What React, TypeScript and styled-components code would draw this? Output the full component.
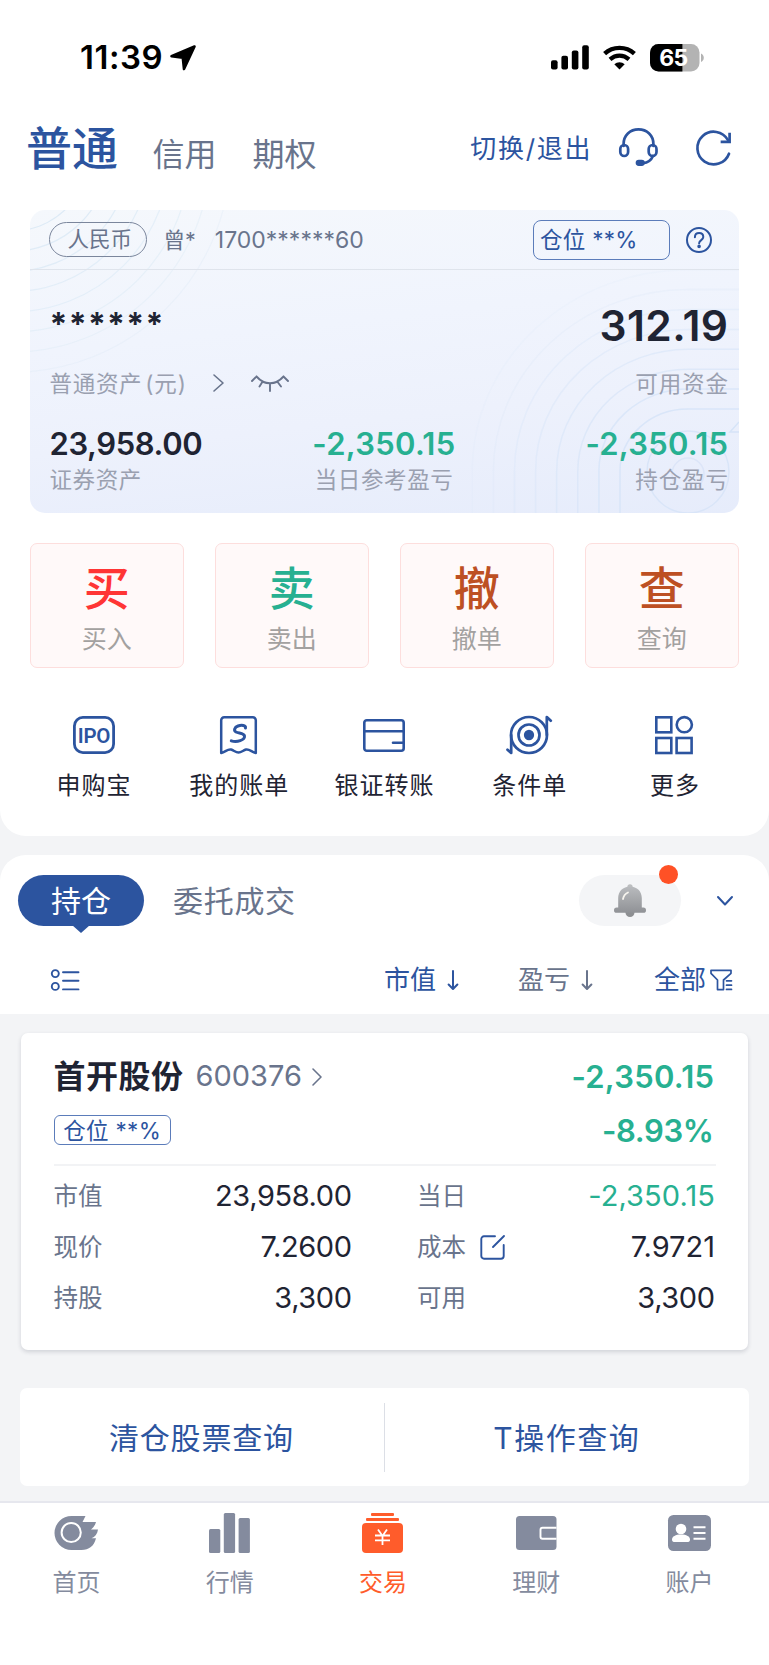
import React from "react";
import styled, { createGlobalStyle } from "styled-components";

const BLUE = "#2c549f";
const SLATE = "#69748c";
const INK = "#1f2433";
const GREEN = "#27b091";
const ORANGE = "#ff5c2b";
const GREY = "#848b9e";
const CAPTION = "#9aa0b0";

const GlobalStyle = createGlobalStyle`
  * { box-sizing: border-box; }
  html, body { margin: 0; padding: 0; background: #f3f4f6; }
  body { font-family: Inter, "Noto Sans CJK SC", sans-serif; -webkit-font-smoothing: antialiased; }
  svg { display: block; flex: none; overflow: visible; }
`;

const Screen = styled.div`
  width: 769px;
  height: 1665px;
  display: flex;
  flex-direction: column;
  overflow: hidden;
  background: #f3f4f6;
  color: ${INK};
`;

const Text = styled.span<{ $size: number; $color?: string; $weight?: number; $track?: number }>`
  display: block;
  font-size: ${(p) => p.$size}px;
  line-height: 1.2;
  color: ${(p) => p.$color ?? INK};
  font-weight: ${(p) => p.$weight ?? 400};
  letter-spacing: ${(p) => p.$track ?? 0}px;
  margin-right: ${(p) => -(p.$track ?? 0)}px;
  white-space: pre;
`;

const TopPanel = styled.section`
  height: 836px;
  flex: none;
  background: #fff;
  border-radius: 0 0 26px 26px;
`;

const StatusBar = styled.div`
  height: 115px;
  padding: 0 65px 0 80px;
  display: flex;
  align-items: center;
  svg:first-of-type { margin-left: 7px; }
`;

const StatusIcons = styled.div`
  margin-left: auto;
  display: flex;
  align-items: center;
  gap: 14px;
  svg:first-of-type { margin-left: 0; }
`;

const Header = styled.header`
  height: 68px;
  padding: 0 37px 0 26px;
  display: flex;
  align-items: center;
`;

const HeaderTab = styled(Text)<{ $gap: number }>`
  margin-left: ${(p) => p.$gap}px;
  padding-top: 13px;
`;

const HeaderActions = styled.div`
  margin-left: auto;
  display: flex;
  align-items: center;
  margin-top: -3px;
  > span { padding-top: 2px; }
`;

const ActionIcon = styled.div<{ $gap: number }>`
  margin-left: ${(p) => p.$gap}px;
`;

const AssetCard = styled.div`
  position: relative;
  height: 303px;
  margin: 27px 30px 0;
  border-radius: 15px;
  overflow: hidden;
  background: linear-gradient(174deg, #f5f8fc 0%, #f0f4fd 38%, #edf1fc 65%, #e6ecfb 100%);
`;

const CardPattern = styled.svg`
  position: absolute;
  inset: 0;
`;

const CardHead = styled.div`
  position: relative;
  height: 60px;
  padding: 0 27px 0 19px;
  display: flex;
  align-items: center;
  border-bottom: 1px solid #dfe4ec;
  > span { padding-top: 2px; }
`;

const CurrencyPill = styled.div`
  width: 98px;
  height: 35px;
  padding-left: 17.5px;
  margin-right: 16.5px;
  border: 1px solid #7b869c;
  border-radius: 18px;
  display: flex;
  align-items: center;
`;

const AccountNo = styled(Text)`
  margin-left: 19px;
`;

const RatioBox = styled.div`
  width: 137px;
  height: 40px;
  margin-left: auto;
  margin-right: 16px;
  padding-left: 6px;
  border: 1px solid #5b7cba;
  border-radius: 8px;
  display: flex;
  align-items: center;
`;

const CardBody = styled.div`
  position: relative;
  padding: 30px 11px 0 19.5px;
`;

const AmountRow = styled.div`
  height: 50px;
  display: flex;
  align-items: center;
  justify-content: space-between;
`;

const CaptionRow = styled.div`
  height: 30px;
  margin-top: 18px;
  display: flex;
  align-items: center;
`;

const CaptionIcon = styled.div<{ $gap: number }>`
  margin-left: ${(p) => p.$gap}px;
`;

const Trailing = styled.div`
  margin-left: auto;
`;

const Stats = styled.div`
  display: grid;
  grid-template-columns: 1fr auto 1fr;
  margin: 28px 0 0 -10px;
`;

const Stat = styled.div<{ $align: string }>`
  display: flex;
  flex-direction: column;
  align-items: ${(p) => p.$align};
  padding-left: ${(p) => (p.$align === "flex-start" ? 10 : 0)}px;
  > span { height: 36px; line-height: 36px; }
`;

const TradeRow = styled.div`
  display: grid;
  grid-template-columns: repeat(4, 1fr);
  gap: 30.5px;
  padding: 30px 30px 0 29.5px;
`;

const TradeButton = styled.button`
  height: 125px;
  padding: 18px 0 0;
  border: 1.5px solid #fddedd;
  border-radius: 7px;
  background: #fff9f9;
  font-family: inherit;
  display: flex;
  flex-direction: column;
  align-items: center;
  > span:first-child { height: 52px; line-height: 52px; }
  > span:last-child { height: 50px; line-height: 50px; }
`;

const ShortcutRow = styled.nav`
  display: grid;
  grid-template-columns: repeat(5, 1fr);
  padding: 42px 22px 0 21px;
`;

const Shortcut = styled.div`
  display: flex;
  flex-direction: column;
  align-items: center;
  > span { height: 50px; line-height: 50px; margin-top: 1px; }
`;

const ShortcutIcon = styled.div`
  height: 50px;
  display: flex;
  align-items: center;
`;

const HoldingsPanel = styled.section`
  height: 159px;
  flex: none;
  margin-top: 19px;
  background: #fff;
  border-radius: 26px 26px 0 0;
`;

const TabRow = styled.div`
  display: flex;
  align-items: center;
  height: 51px;
  margin-top: 20px;
  padding: 0 36px 0 18px;
`;

const ActiveTab = styled.div`
  position: relative;
  width: 126px;
  height: 51px;
  margin-right: 29px;
  border-radius: 26px;
  background: ${BLUE};
  display: flex;
  align-items: center;
  justify-content: center;
  &::after {
    content: "";
    position: absolute;
    left: 54px;
    top: 50px;
    border: 9px solid transparent;
    border-top: 8px solid ${BLUE};
    border-bottom: 0;
  }
`;

const BellPill = styled.div`
  position: relative;
  width: 102px;
  height: 51px;
  margin-left: auto;
  margin-right: 36px;
  border-radius: 26px;
  background: #f4f5f7;
  display: flex;
  align-items: center;
  justify-content: center;
`;

const Dot = styled.i`
  position: absolute;
  right: 3px;
  top: -10px;
  width: 19px;
  height: 19px;
  border-radius: 50%;
  background: #ff5126;
`;

const SortRow = styled.div`
  display: flex;
  align-items: center;
  height: 50px;
  margin-top: 29px;
  padding: 0 37px 0 51px;
`;

const SortItem = styled.div<{ $gap?: number; $inner: number }>`
  display: flex;
  align-items: center;
  gap: ${(p) => p.$inner}px;
  margin-left: ${(p) => (p.$gap ? `${p.$gap}px` : "auto")};
`;

const StockCard = styled.article`
  height: 317px;
  flex: none;
  margin: 19px 21px 0;
  padding: 17px 32.5px 0 32.5px;
  border-radius: 7px;
  background: #fff;
  box-shadow: 0 2px 4px rgba(30, 40, 60, 0.16);
`;

const StockLine = styled.div`
  height: 53.5px;
  padding-right: 1.5px;
  display: flex;
  align-items: center;
`;

const StockCode = styled(Text)`
  margin-left: 12.5px;
  margin-right: 10px;
`;

const StockTag = styled.div`
  width: 117px;
  height: 30px;
  border: 1px solid #5b7cba;
  border-radius: 6px;
  display: flex;
  align-items: center;
  justify-content: center;
`;

const Details = styled.div`
  display: grid;
  grid-template-columns: 298.5px 298px;
  justify-content: space-between;
  margin-top: 7px;
  padding-top: 5px;
  padding-right: 0.5px;
  border-top: 2px solid #f2f3f5;
`;

const Detail = styled.div`
  height: 51px;
  display: flex;
  align-items: center;
  svg { margin-left: 14px; }
`;

const QueryCard = styled.div`
  height: 98px;
  flex: none;
  margin: 38px 20px 0;
  border-radius: 7px;
  background: #fff;
  display: grid;
  grid-template-columns: 1fr 1px 1fr;
  align-items: center;
  justify-items: center;
  > span { padding: 2px 2px 0 0; }
`;

const QueryDivider = styled.i`
  width: 1px;
  height: 69px;
  background: #dcdfe6;
`;

const TabBar = styled.nav`
  margin-top: 15px;
  flex: 1;
  border-top: 2px solid #e6e7ee;
  background: #fff;
  display: grid;
  grid-template-columns: repeat(5, 1fr);
  padding: 8px 3px 0 0;
`;

const TabItem = styled.div`
  display: flex;
  flex-direction: column;
  align-items: center;
  > span { height: 50px; line-height: 50px; margin-top: 3px; }
`;

const TabIcon = styled.div`
  height: 44px;
  display: flex;
  align-items: center;
`;

const line = (width: number, color = BLUE) => ({
  fill: "none",
  stroke: color,
  strokeWidth: width,
  strokeLinecap: "round" as const,
  strokeLinejoin: "round" as const,
});

const LocationArrow = () => (
  <svg width="26" height="26" viewBox="0 0 26 26">
    <path d="M24.500 1.500 1.500 11.200 12.800 12.600 14 24z" fill="#000" stroke="#000" strokeWidth="2.600" strokeLinejoin="round" />
  </svg>
);

const Signal = () => (
  <svg width="38" height="25" viewBox="0 0 38 25">
    {[9.3, 13.8, 19, 24.3].map((h, i) => (
      <rect key={h} x={i * 10.4} y={24.6 - h} width="6.6" height={h} rx="2" fill="#000" />
    ))}
  </svg>
);

const Wifi = () => (
  <svg width="33" height="25" viewBox="0 0 33 25">
    <path d="M1.6 8.6C10 .9 23 .9 31.4 8.6" fill="none" stroke="#000" strokeWidth="4.4" />
    <path d="M7 14.4c5.6-5 13.4-5 19 0" fill="none" stroke="#000" strokeWidth="4.2" />
    <path d="M16.5 24.6 11.3 19.2c3-2.7 7.4-2.7 10.4 0z" fill="#000" />
  </svg>
);

const Battery = () => (
  <svg width="54" height="28" viewBox="0 0 54 28">
    <defs>
      <clipPath id="battery-shell"><rect width="49.5" height="27.4" rx="8.5" /></clipPath>
    </defs>
    <g clipPath="url(#battery-shell)">
      <rect width="50" height="28" fill="#b3b3b3" />
      <rect width="32.4" height="28" fill="#000" />
    </g>
    <path d="M51 9.5c1.8.8 2.8 2.3 2.8 4.3s-1 3.500-2.800 4.300z" fill="#b3b3b3" />
    <text x="23.500" y="22" textAnchor="middle" fontSize="23" fontWeight="700" letterSpacing="-0.500" fill="#fff">65</text>
  </svg>
);

const Headset = () => (
  <svg width="39" height="39" viewBox="0 0 39 39" {...line(2.7)}>
    <path d="M4.600 18V16C4.600 7.500 11 1.400 19.500 1.400S34.400 7.500 34.400 16v2" />
    <rect x="1.300" y="17" width="7.800" height="11" rx="3.900" />
    <rect x="29.700" y="17" width="7.800" height="11" rx="3.900" />
    <path d="M34 28c-1.800 4.200-5 6.700-10 7.200" />
    <rect x="18" y="33" width="6.500" height="3.600" rx="1.800" fill={BLUE} />
  </svg>
);

const Refresh = () => (
  <svg width="36" height="36" viewBox="0 0 36 36" {...line(2.700)}>
    <path d="M33 23.700A16.300 16.300 0 1 1 32 10.200" />
    <path d="M33.600 4v7.800H26" strokeLinecap="square" strokeLinejoin="miter" />
  </svg>
);

const Help = () => (
  <svg width="26" height="26" viewBox="0 0 26 26" {...line(2)}>
    <circle cx="13" cy="13" r="12" />
    <path d="M8.900 10.300c0-2.600 1.700-4.200 4.200-4.200s4.200 1.500 4.200 3.900c0 3-4.200 3.200-4.200 6.300" />
    <circle cx="13.100" cy="19.400" r=".8" fill={BLUE} />
  </svg>
);

const Chevron = ({ w, h, color, stroke }: { w: number; h: number; color: string; stroke: number }) => (
  <svg width={w} height={h} viewBox={`0 0 ${w} ${h}`} {...line(stroke, color)}>
    <path d={`M1 1 ${w - 1} ${h / 2} 1 ${h - 1}`} />
  </svg>
);

const ClosedEye = () => (
  <svg width="38" height="17" viewBox="0 0 38 17" {...line(1.900, SLATE)}>
    <path d="M5.500 1.500c8 9 19 9 27 0M5.500 1.500 1 6M32.500 1.500 37 6M11 7.500l-2.500 4M27 7.500l3 4M19 8.500V16" />
  </svg>
);

const Pattern = () => (
  <CardPattern width="709" height="303" viewBox="30 210 709 303" fill="none">
    {[0, 1, 2, 3, 4, 5, 6, 7].map((i) => (
      <circle key={i} cx="12" cy="154" r={77 + i * 20.200} stroke="#d8e8f5" strokeWidth="1.200" opacity={0.85 - i * 0.08} />
    ))}
    {[0, 1, 2, 3, 4, 5, 6, 7].map((i) => {
      const rx = 68 + i * 21.100;
      const ry = 62 + i * 19.900;
      return (
        <path
          key={i}
          d={`M${688 - rx} 515V471A${rx} ${ry} 0 0 1 688 ${471 - ry}H740`}
          stroke="#d6e4f8"
          strokeWidth="1.500"
          opacity={0.880 - i * 0.110}
        />
      );
    })}
    <circle cx="688" cy="472" r="41" stroke="#d9e5f8" strokeWidth="1.500" />
    <circle cx="688" cy="474" r="16" stroke="#dce5f8" strokeWidth="1.500" />
    <path d="M739 422l-9 10h9" stroke="#d6e4f8" strokeWidth="1.500" />
  </CardPattern>
);

const IpoIcon = () => (
  <svg width="42" height="38" viewBox="0 0 42 38">
    <rect x="1.400" y="1.400" width="39.200" height="35.200" rx="8.500" {...line(2.800)} />
    <text x="21" y="26.600" textAnchor="middle" fontFamily="Roboto" fontSize="20.500" fontWeight="600" letterSpacing="-0.300" fill={BLUE}>IPO</text>
  </svg>
);

const BillIcon = () => (
  <svg width="37" height="39" viewBox="0 0 37 39">
    <path d="M1.200 37V4.200a3 3 0 0 1 3-3h28.600a3 3 0 0 1 3 3V37c-4-1-6.500-4.300-9.800-3.500-2.800.7-4.500 3-7.500 3s-4.700-2.300-7.500-3C7.700 32.700 5.200 36 1.200 37z" {...line(2.500)} />
    <path d="M25.500 12c.6-2.800-4-3.200-7.500-2-3.600 1.300-4.500 4.500-2 6 2.800 1.400 8 1 8.500 4 .4 4-7.500 6.800-13.200 4.800" {...line(3)} />
  </svg>
);

const TransferIcon = () => (
  <svg width="42" height="33" viewBox="0 0 42 33" {...line(2.600)}>
    <rect x="1.300" y="1.300" width="39.400" height="30.400" rx="2.500" />
    <path d="M1.300 12.300h39.400M30 23.800h10.700" />
  </svg>
);

const TargetIcon = () => (
  <svg width="46" height="40" viewBox="0 0 46 40" {...line(2.700)}>
    <circle cx="23" cy="20" r="18" />
    <circle cx="23" cy="20" r="10.500" />
    <circle cx="23" cy="20" r="3.800" fill={BLUE} />
    <path d="M5.200 20v18L1.500 34.700M40.800 20V2l4 3.700" />
  </svg>
);

const MoreIcon = () => (
  <svg width="38" height="38" viewBox="0 0 38 38" fill="none" stroke={BLUE} strokeWidth="2.600">
    <rect x="1.300" y="1.300" width="15" height="15" />
    <circle cx="29.300" cy="8.700" r="7.600" />
    <rect x="1.300" y="22" width="15" height="15" />
    <rect x="21.600" y="22" width="15" height="15" />
  </svg>
);

const Bell = () => (
  <svg width="32" height="33" viewBox="0 0 32 33">
    <defs>
      <linearGradient id="bell-body" x1="0" y1="0" x2="0" y2="1">
        <stop offset="0" stopColor="#b9bbbe" />
        <stop offset="1" stopColor="#909296" />
      </linearGradient>
    </defs>
    <circle cx="16" cy="28.500" r="4.500" fill="#8d8f92" />
    <circle cx="16" cy="2.800" r="2.600" fill="#bcbec0" />
    <path d="M16 2.500C8.800 2.500 4.200 7.500 4.200 14v9.600H2.600a2.600 2.600 0 0 0 0 5.200h26.800a2.600 2.600 0 0 0 0-5.200h-1.600V14C27.800 7.500 23.200 2.500 16 2.500z" fill="url(#bell-body)" />
    <path d="M9 15c.6-3.200 2.400-5.300 5-6.500" fill="none" stroke="#f6f4ee" strokeWidth="1.800" strokeLinecap="round" />
  </svg>
);

const ChevronDown = () => (
  <svg width="16" height="10" viewBox="0 0 16 10" {...line(2)}>
    <path d="M1 1l7 7.500L15 1" />
  </svg>
);

const ListIcon = () => (
  <svg width="28" height="22" viewBox="0 0 28 22" {...line(1.900)}>
    <circle cx="4.300" cy="4.600" r="3.500" />
    <circle cx="4.300" cy="17.400" r="3.500" />
    <path d="M12 3.200h15.500M12 11.700h15.500M12 20.400h15.500" />
  </svg>
);

const ArrowDown = ({ color }: { color: string }) => (
  <svg width="10" height="20" viewBox="0 0 10 20" {...line(2, color)}>
    <path d="M5 1v17.500M.6 14.500 5 19l4.400-4.500" />
  </svg>
);

const Funnel = () => (
  <svg width="22" height="22" viewBox="0 0 22 22" {...line(1.700)}>
    <path d="M12.300 20.600H7.500V11L1 4.300V1.300h20v3L13.500 11v9.600" />
    <path d="M16.500 11.800h5M16.500 16.200h5M16.500 20.400h5" />
  </svg>
);

const EditIcon = () => (
  <svg width="25" height="25" viewBox="0 0 25 25" {...line(1.900)}>
    <path d="M15 1.300H4a2.700 2.700 0 0 0-2.700 2.700v17A2.700 2.700 0 0 0 4 23.700h17a2.700 2.700 0 0 0 2.700-2.700V10M24 1 13 12" />
  </svg>
);

const HomeIcon = () => (
  <svg width="43" height="34" viewBox="0 0 43 34">
    <path d="M16.500 0h14l-3 6H41c-1 3.500-2.500 5.500-5 7.400h7c-.5 4.500-3 7.500-6.500 8.800H41C39 30 34 34 26.500 34h-10a17 17 0 0 1 0-34z" fill={GREY} />
    <circle cx="16.200" cy="16.500" r="9.600" fill="none" stroke="#fff" strokeWidth="2" />
  </svg>
);

const MarketIcon = () => (
  <svg width="41" height="40" viewBox="0 0 41 40" fill={GREY}>
    <rect y="16" width="11.300" height="24" rx="1.500" />
    <rect x="14.800" y="0" width="11.300" height="40" rx="1.500" />
    <rect x="29.600" y="5" width="11.300" height="35" rx="1.500" />
  </svg>
);

const TradeIcon = () => (
  <svg width="41" height="40" viewBox="0 0 41 40">
    <rect x="9" y="0" width="23" height="3" rx="1" fill={ORANGE} />
    <rect x="4" y="5" width="33" height="3" rx="1" fill={ORANGE} />
    <rect x="0" y="10" width="41" height="30" rx="4" fill={ORANGE} />
    <path d="M16 16.500l4.500 6.500 4.500-6.500M20.500 23v9M13 22.500h15M13 27.300h15" fill="none" stroke="#fff" strokeWidth="1.800" />
  </svg>
);

const WealthIcon = () => (
  <svg width="41" height="34" viewBox="0 0 41 34">
    <rect width="40.500" height="34" rx="3.500" fill={GREY} />
    <path d="M40.500 11.700H26.500a2 2 0 0 0-2 2v7a2 2 0 0 0 2 2H40.500" fill="none" stroke="#fff" strokeWidth="1.900" />
  </svg>
);

const AccountIcon = () => (
  <svg width="43" height="36" viewBox="0 0 43 36">
    <rect width="43" height="36" rx="5.500" fill={GREY} />
    <circle cx="13" cy="14" r="5.300" fill="#fff" />
    <path d="M4 24.500c0-3 3.500-5 9-5s9 2 9 5c0 2-1 2.500-3 2.500H7c-2 0-3-.5-3-2.500z" fill="#fff" />
    <path d="M25.500 12.300h12M25.500 18h12M25.500 23.800h12" stroke="#fff" strokeWidth="2" />
  </svg>
);

const trades = [
  ["买", "买入", "#ff3535"],
  ["卖", "卖出", GREEN],
  ["撤", "撤单", "#bd5023"],
  ["查", "查询", "#bd5023"],
];

const shortcuts: [string, React.ComponentType][] = [
  ["申购宝", IpoIcon],
  ["我的账单", BillIcon],
  ["银证转账", TransferIcon],
  ["条件单", TargetIcon],
  ["更多", MoreIcon],
];

const details: { label: string; value: string; color?: string; track?: number; editable?: boolean }[] = [
  { label: "市值", value: "23,958.00", track: -0.4 },
  { label: "当日", value: "-2,350.15", color: GREEN, track: 0.1 },
  { label: "现价", value: "7.2600", track: -0.4 },
  { label: "成本", value: "7.9721", editable: true },
  { label: "持股", value: "3,300", track: -0.4 },
  { label: "可用", value: "3,300", track: -0.4 },
];

const tabs: [string, React.ComponentType, string][] = [
  ["首页", HomeIcon, GREY],
  ["行情", MarketIcon, GREY],
  ["交易", TradeIcon, ORANGE],
  ["理财", WealthIcon, GREY],
  ["账户", AccountIcon, GREY],
];

export default function App() {
  return (
    <>
      <GlobalStyle />
      <Screen>
        <TopPanel>
          <StatusBar>
            <Text $size={33} $weight={600} $color="#000" $track={0.500}>11:39</Text>
            <LocationArrow />
            <StatusIcons>
              <Signal />
              <Wifi />
              <Battery />
            </StatusIcons>
          </StatusBar>

          <Header>
            <Text $size={46} $weight={500} $color={BLUE}>普通</Text>
            <HeaderTab $size={32} $color={SLATE} $gap={34.500}>信用</HeaderTab>
            <HeaderTab $size={32} $color={SLATE} $gap={36}>期权</HeaderTab>
            <HeaderActions>
              <Text $size={26} $color={BLUE} $track={1.700}>切换/退出</Text>
              <ActionIcon $gap={28.500}><Headset /></ActionIcon>
              <ActionIcon $gap={38}><Refresh /></ActionIcon>
            </HeaderActions>
          </Header>

          <AssetCard>
            <Pattern />
            <CardHead>
              <CurrencyPill><Text $size={21.500} $color={SLATE}>人民币</Text></CurrencyPill>
              <Text $size={21.500} $color={SLATE}>曾*</Text>
              <AccountNo $size={23} $color={SLATE}>1700******60</AccountNo>
              <RatioBox><Text $size={22.500} $color={BLUE} $track={0.300}>仓位 **%</Text></RatioBox>
              <Help />
            </CardHead>
            <CardBody>
              <AmountRow>
                <Text $size={32} $weight={700} $track={1.300}>******</Text>
                <Text $size={42.500} $weight={600} $track={0.400}>312.19</Text>
              </AmountRow>
              <CaptionRow>
                <Text $size={22.500} $color={CAPTION} $track={0.700}>普通资产</Text>
                <CaptionIcon $gap={3.500}>
                  <Text $size={22.500} $color={CAPTION} $track={0.900}>(元)</Text>
                </CaptionIcon>
                <CaptionIcon $gap={27.500}><Chevron w={11} h={18} color={SLATE} stroke={1.600} /></CaptionIcon>
                <CaptionIcon $gap={27}><ClosedEye /></CaptionIcon>
                <Trailing><Text $size={22.500} $color={CAPTION} $track={0.900}>可用资金</Text></Trailing>
              </CaptionRow>
              <Stats>
                <Stat $align="flex-start">
                  <Text $size={31} $weight={600} $track={-0.400}>23,958.00</Text>
                  <Text $size={22.500} $color={CAPTION} $track={0.600}>证券资产</Text>
                </Stat>
                <Stat $align="center">
                  <Text $size={31} $weight={600} $color={GREEN} $track={0.300}>-2,350.15</Text>
                  <Text $size={22.500} $color={CAPTION} $track={0.600}>当日参考盈亏</Text>
                </Stat>
                <Stat $align="flex-end">
                  <Text $size={31} $weight={600} $color={GREEN} $track={0.250}>-2,350.15</Text>
                  <Text $size={22.500} $color={CAPTION} $track={0.900}>持仓盈亏</Text>
                </Stat>
              </Stats>
            </CardBody>
          </AssetCard>

          <TradeRow>
            {trades.map(([glyph, label, color]) => (
              <TradeButton key={label}>
                <Text $size={46} $weight={500} $color={color}>{glyph}</Text>
                <Text $size={25} $color="#a3a1a0">{label}</Text>
              </TradeButton>
            ))}
          </TradeRow>

          <ShortcutRow>
            {shortcuts.map(([label, Icon]) => (
              <Shortcut key={label}>
                <ShortcutIcon><Icon /></ShortcutIcon>
                <Text $size={24} $track={1}>{label}</Text>
              </Shortcut>
            ))}
          </ShortcutRow>
        </TopPanel>

        <HoldingsPanel>
          <TabRow>
            <ActiveTab><Text $size={30} $color="#fff">持仓</Text></ActiveTab>
            <Text $size={30} $color={SLATE} $track={0.700}>委托成交</Text>
            <BellPill>
              <Bell />
              <Dot />
            </BellPill>
            <ChevronDown />
          </TabRow>
          <SortRow>
            <ListIcon />
            <SortItem $inner={12}>
              <Text $size={26} $color={BLUE}>市值</Text>
              <ArrowDown color={BLUE} />
            </SortItem>
            <SortItem $gap={60} $inner={12}>
              <Text $size={26} $color={SLATE}>盈亏</Text>
              <ArrowDown color={SLATE} />
            </SortItem>
            <SortItem $gap={62} $inner={4}>
              <Text $size={26} $color={BLUE}>全部</Text>
              <Funnel />
            </SortItem>
          </SortRow>
        </HoldingsPanel>

        <StockCard>
          <StockLine>
            <Text $size={32} $weight={600} $track={0.500}>首开股份</Text>
            <StockCode $size={29} $color={SLATE}>600376</StockCode>
            <Chevron w={10} h={18} color={SLATE} stroke={1.600} />
            <Trailing><Text $size={31} $weight={600} $color={GREEN} $track={0.250}>-2,350.15</Text></Trailing>
          </StockLine>
          <StockLine>
            <StockTag><Text $size={22.500} $color={BLUE} $track={0.300}>仓位 **%</Text></StockTag>
            <Trailing><Text $size={31} $weight={600} $color={GREEN} $track={-0.350}>-8.93%</Text></Trailing>
          </StockLine>
          <Details>
            {details.map((d) => (
              <Detail key={d.label}>
                <Text $size={24.500} $color={SLATE}>{d.label}</Text>
                {d.editable && <EditIcon />}
                <Trailing><Text $size={29} $color={d.color} $track={d.track}>{d.value}</Text></Trailing>
              </Detail>
            ))}
          </Details>
        </StockCard>

        <QueryCard>
          <Text $size={30} $color={BLUE} $track={0.800}>清仓股票查询</Text>
          <QueryDivider />
          <Text $size={30} $color={BLUE} $track={1.500}>T操作查询</Text>
        </QueryCard>

        <TabBar>
          {tabs.map(([label, Icon, color]) => (
            <TabItem key={label}>
              <TabIcon><Icon /></TabIcon>
              <Text $size={24} $color={color}>{label}</Text>
            </TabItem>
          ))}
        </TabBar>
      </Screen>
    </>
  );
}
